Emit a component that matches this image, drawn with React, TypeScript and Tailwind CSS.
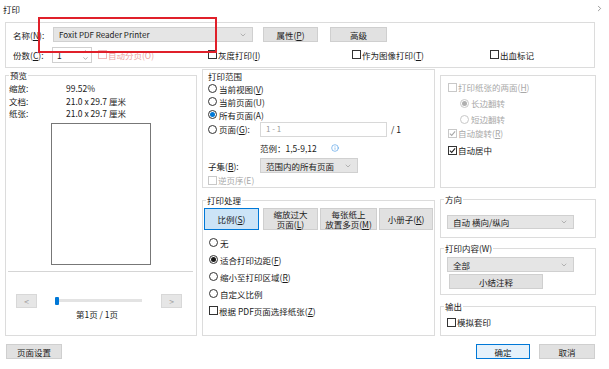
import { ChevronDown, ChevronRight, ChevronUp, Info } from 'lucide-react';
import type { ReactNode } from 'react';

function Radio({ on, dot = '#1a1a1a', disabled, children }: { on?: boolean; dot?: string; disabled?: boolean; children: ReactNode }) {
  return (
    <div className={`flex items-center gap-[2px] ${disabled ? 'text-[#a8a8a8]' : ''}`}>
      <span
        className={`flex h-[9px] w-[9px] items-center justify-center rounded-full border bg-white ${disabled ? 'border-[#c8c8c8]' : 'border-[#333]'}`}
      >
        {on && <span className="h-[5px] w-[5px] rounded-full" style={{ background: dot }} />}
      </span>
      <span>{children}</span>
    </div>
  );
}

function Check({ on, disabled, pink, children }: { on?: boolean; disabled?: boolean; pink?: boolean; children: ReactNode }) {
  const box = pink ? 'border-[#f0b8b8]' : disabled ? 'border-[#c8c8c8]' : 'border-[#333]';
  const txt = pink ? 'text-[#eba3a3]' : disabled ? 'text-[#a8a8a8]' : '';
  return (
    <div className={`flex items-center gap-[1px] ${txt}`}>
      <span className={`flex h-[9px] w-[9px] items-center justify-center border bg-white ${box}`}>
        {on && (
          <svg width="7" height="7" viewBox="0 0 8 8">
            <path d="M1 4.2 L3.1 6.2 L7 1.6" fill="none" stroke={disabled ? '#a8a8a8' : '#222'} strokeWidth="1.2" />
          </svg>
        )}
      </span>
      <span>{children}</span>
    </div>
  );
}

function Select({ value, className }: { value: string; className: string }) {
  return (
    <div className={`flex items-center justify-between border border-[#d0d0d0] bg-[#e5e5e5] pl-[5px] pr-[5px] ${className}`}>
      <span>{value}</span>
      <ChevronDown size={8} strokeWidth={1.4} className="text-[#777]" />
    </div>
  );
}

function Btn({ children, className }: { children: ReactNode; className: string }) {
  return (
    <div className={`flex items-center justify-center border border-[#cfcfcf] bg-[#e1e1e1] ${className}`}>
      <span className="text-center">{children}</span>
    </div>
  );
}

function Group({ title, className, children }: { title: string; className: string; children: ReactNode }) {
  return (
    <fieldset className={`border border-[#dcdcdc] bg-white ${className}`}>
      <legend className="ml-[3px] px-[1px] leading-[12px]">{title}</legend>
      {children}
    </fieldset>
  );
}

export default function App() {
  return (
    <div className="relative h-[369px] w-[609px] overflow-hidden bg-white font-['Noto_Sans_CJK_SC','Noto_Sans',sans-serif] text-[8.5px] leading-[12px] text-[#1a1a1a]">
      <div className="flex h-[17px] items-center justify-between pl-[3px] pr-[5px]">
        <span>打印</span>
        <ChevronRight size={9} strokeWidth={1.4} className="text-[#444]" />
      </div>

      {/* printer */}
      <div className="ml-[5px] mt-[5px] h-[46px] w-[590px] border border-[#dcdcdc] bg-white pl-[7px] pt-[4px]">
        <div className="flex h-[15px] items-center">
          <span className="w-[40px]">
            名称(<u>N</u>):
          </span>
          <Select value="Foxit PDF Reader Printer" className="h-[15px] w-[200px] text-[8px]" />
          <Btn className="ml-[10px] h-[15px] w-[55px]">
            属性(<u>P</u>)
          </Btn>
          <Btn className="ml-[12px] h-[15px] w-[57px]">高级</Btn>
        </div>
        <div className="mt-[5px] flex h-[15px] items-center">
          <span className="w-[39px]">
            份数(<u>C</u>):
          </span>
          <div className="flex h-[16px] w-[40px] items-center justify-between border border-[#d0d0d0] bg-white pl-[4px] pr-[2px]">
            <span>1</span>
            <div className="flex flex-col text-[#555]">
              <ChevronUp size={7} strokeWidth={1.6} />
              <ChevronDown size={7} strokeWidth={1.6} />
            </div>
          </div>
          <div className="ml-[6px] w-[110px]">
            <Check pink>自动分页(O)</Check>
          </div>
          <div className="w-[144px]">
            <Check>
              灰度打印(<u>I</u>)
            </Check>
          </div>
          <div className="w-[138px]">
            <Check>
              作为图像打印(<u>T</u>)
            </Check>
          </div>
          <Check>出血标记</Check>
        </div>
      </div>

      <div className="mt-[1px] flex items-start pl-[5px]">
        {/* preview */}
        <Group title="预览" className="h-[267px] w-[192px]">
          <div className="pl-[3px] pt-[1px] leading-[12.5px]">
            <div className="flex">
              <span className="w-[57px]">缩放:</span>
              <span>99.52%</span>
            </div>
            <div className="flex">
              <span className="w-[57px]">文档:</span>
              <span>21.0 x 29.7 厘米</span>
            </div>
            <div className="flex">
              <span className="w-[57px]">纸张:</span>
              <span>21.0 x 29.7 厘米</span>
            </div>
          </div>
          <div className="mx-auto mt-[3px] h-[142px] w-[100px] border border-[#777] bg-white" />
          <div className="ml-[2px] mr-[3px] mt-[6px] h-px bg-[#d5d5d5]" />
          <div className="mt-[22px] flex h-[14px] items-center">
            <Btn className="ml-[10px] h-[14px] w-[21px] border-[#d8d8d8] bg-[#e6e6e6] text-[#a0a0a0]">&lt;</Btn>
            <div className="relative ml-[18px] flex h-[14px] w-[87px] items-center">
              <div className="h-[3px] w-full bg-[#e3e3e3]" />
              <div className="absolute left-0 top-[3px] h-[8px] w-[4px] rounded-[1px] bg-[#0078d7]" />
            </div>
            <Btn className="ml-[19px] h-[14px] w-[21px] border-[#d8d8d8] bg-[#e6e6e6] text-[#a0a0a0]">&gt;</Btn>
          </div>
          <div className="pr-[8px] text-center">第1页 / 1页</div>
        </Group>

        {/* middle column */}
        <div className="ml-[5px] flex w-[233px] flex-col">
          <div className="h-[119px] border border-[#dcdcdc] bg-white pl-[5px]">
            <div className="h-[12px]">打印范围</div>
            <div className="flex h-[13px] items-center">
              <Radio>
                当前视图(<u>V</u>)
              </Radio>
            </div>
            <div className="flex h-[13px] items-center">
              <Radio>当前页面(U)</Radio>
            </div>
            <div className="flex h-[13px] items-center">
              <Radio on dot="#0078d7">
                所有页面(A)
              </Radio>
            </div>
            <div className="flex h-[16px] items-center">
              <div className="w-[52px]">
                <Radio>
                  页面(<u>G</u>):
                </Radio>
              </div>
              <div className="flex h-[15px] w-[127px] items-center border border-[#d8d8d8] bg-white pl-[5px] text-[8px] text-[#9a9a9a]">
                1 - 1
              </div>
              <span className="ml-[4px]">/ 1</span>
            </div>
            <div className="ml-[52px] mt-[5px] flex h-[12px] items-center">
              <span>范例：1,5-9,12</span>
              <Info size={8} strokeWidth={1.6} className="ml-[14px] text-[#2d8ae0]" />
            </div>
            <div className="mt-[4px] flex h-[15px] items-center">
              <span className="w-[52px]">
                子集(<u>B</u>):
              </span>
              <Select value="范围内的所有页面" className="h-[15px] w-[98px]" />
            </div>
            <div className="mt-[1px] flex h-[12px] items-center">
              <Check disabled>逆页序(E)</Check>
            </div>
          </div>

          <Group title="打印处理" className="mt-[6px] h-[142px] w-[233px]">
            <div className="ml-[1px] mt-[2px] flex h-[22px] leading-[10.5px]">
              <div className="flex h-[22px] w-[55px] items-center justify-center border border-[#0078d7] bg-[#cce4f7]">
                <span>
                  比例(<u>S</u>)
                </span>
              </div>
              <Btn className="ml-[4px] h-[22px] w-[55px]">
                缩放过大
                <br />
                页面(<u>L</u>)
              </Btn>
              <Btn className="ml-[2px] h-[22px] w-[57px]">
                每张纸上
                <br />
                放置多页(<u>M</u>)
              </Btn>
              <Btn className="ml-[2px] h-[22px] w-[54px]">
                小册子(<u>K</u>)
              </Btn>
            </div>
            <div className="mt-[4px] pl-[6px]">
              <div className="flex h-[17px] items-center">
                <Radio>无</Radio>
              </div>
              <div className="flex h-[17px] items-center">
                <Radio on>
                  适合打印边距(<u>F</u>)
                </Radio>
              </div>
              <div className="flex h-[17px] items-center">
                <Radio>
                  缩小至打印区域(<u>R</u>)
                </Radio>
              </div>
              <div className="flex h-[17px] items-center">
                <Radio>自定义比例</Radio>
              </div>
              <div className="flex h-[17px] items-center">
                <Check>
                  根据 PDF页面选择纸张(<u>Z</u>)
                </Check>
              </div>
            </div>
          </Group>
        </div>

        {/* right column */}
        <div className="ml-[5px] flex w-[156px] flex-col">
          <div className="mt-[6px] h-[113px] border border-[#dcdcdc] bg-white pl-[7px] pt-[5px]">
            <div className="flex h-[12px] items-center">
              <Check disabled>
                打印纸张的两面(<u>H</u>)
              </Check>
            </div>
            <div className="ml-[12px] mt-[4px] flex h-[12px] items-center">
              <Radio on dot="#b0b0b0" disabled>
                长边翻转
              </Radio>
            </div>
            <div className="ml-[12px] mt-[4px] flex h-[12px] items-center">
              <Radio disabled>短边翻转</Radio>
            </div>
            <div className="mt-[2px] flex h-[12px] items-center">
              <Check on disabled>
                自动旋转(<u>R</u>)
              </Check>
            </div>
            <div className="mt-[5px] flex h-[12px] items-center">
              <Check on>自动居中</Check>
            </div>
          </div>

          <Group title="方向" className="mt-[5px] h-[45px] w-[156px]">
            <Select value="自动 横向/纵向" className="ml-[6px] mt-[10px] h-[14px] w-[127px]" />
          </Group>

          <Group title="打印内容(W)" className="mt-[4px] h-[53px] w-[156px]">
            <Select value="全部" className="ml-[6px] mt-[3px] h-[15px] w-[127px]" />
            <Btn className="ml-[8px] mt-[2px] h-[15px] w-[94px]">小结注释</Btn>
          </Group>

          <Group title="输出" className="mt-[5px] h-[36px] w-[156px]">
            <div className="ml-[6px] mt-[4px] flex h-[12px] items-center">
              <Check>模拟套印</Check>
            </div>
          </Group>
        </div>
      </div>

      <div className="mt-[8px] flex h-[15px] items-center pl-[6px]">
        <Btn className="h-[15px] w-[56px]">页面设置</Btn>
        <div className="ml-[414px] flex h-[15px] w-[54px] items-center justify-center border border-[#0078d7] bg-[#e5f1fb]">
          确定
        </div>
        <Btn className="ml-[9px] h-[15px] w-[56px]">取消</Btn>
      </div>

      {/* red highlight drawn over the printer name */}
      <div className="pointer-events-none absolute left-[38px] top-[17px] h-[36px] w-[179px] border-2 border-[#e0202a]" />
    </div>
  );
}
